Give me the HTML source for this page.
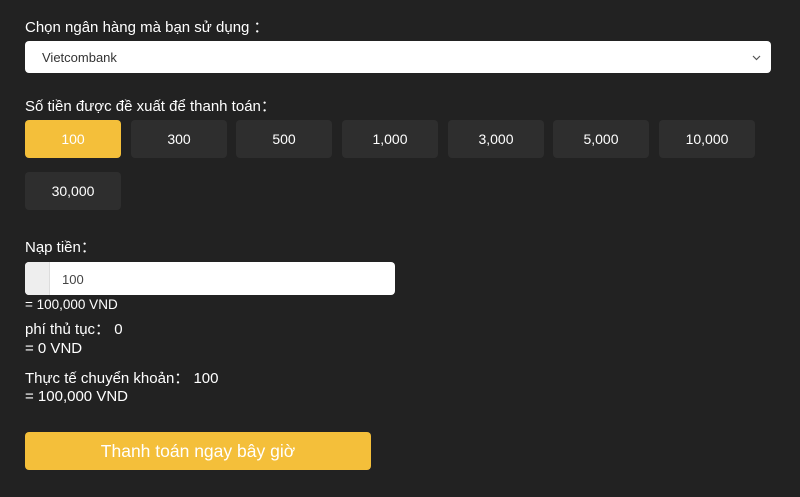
<!DOCTYPE html>
<html><head><meta charset="utf-8"><style>
*{margin:0;padding:0;box-sizing:border-box}
body{width:800px;height:497px;background:#222;font-family:"Liberation Sans",Arial,sans-serif;color:#fff;position:relative;overflow:hidden}
.a{position:absolute;white-space:nowrap}
.l{font-size:15px}
.sel{left:25px;top:41px;width:746px;height:32px;background:#fff;border-radius:4px;color:#333;font-size:13px;padding:9px 0 0 17px}
.btn{position:absolute;width:96px;height:38px;background:#2e2e2e;border-radius:4px;font-size:14px;text-align:center;line-height:38px;color:#fff}
.y{background:#f4bf3a}
</style></head><body>
<div class="a l" style="left:25px;top:16px">Chọn ngân hàng mà bạn sử dụng ：</div>
<div class="a sel">Vietcombank
<svg style="position:absolute;right:10px;top:14px" width="9" height="6" viewBox="0 0 9 6"><path d="M1 1l3.5 3.5L8 1" stroke="#555" stroke-width="1.2" fill="none"/></svg></div>
<div class="a l" style="left:25px;top:95px">Số tiền được đề xuất để thanh toán：</div>
<div class="btn y" style="left:25px;top:120px">100</div>
<div class="btn" style="left:131px;top:120px">300</div>
<div class="btn" style="left:236px;top:120px">500</div>
<div class="btn" style="left:342px;top:120px">1,000</div>
<div class="btn" style="left:448px;top:120px">3,000</div>
<div class="btn" style="left:553px;top:120px">5,000</div>
<div class="btn" style="left:659px;top:120px">10,000</div>
<div class="btn" style="left:25px;top:172px">30,000</div>
<div class="a l" style="left:25px;top:236px">Nạp tiền：</div>
<div class="a" style="left:25px;top:262px;width:370px;height:33px;background:#fff;border-radius:4px;overflow:hidden">
<div style="position:absolute;left:0;top:0;width:25px;height:33px;background:#eee;border-right:1px solid #ddd"></div>
<div style="position:absolute;left:37px;top:10px;font-size:13px;color:#444">100</div></div>
<div class="a" style="left:25px;top:297px;font-size:13.5px">= 100,000 VND</div>
<div class="a" style="left:25px;top:318px;font-size:15px">phí thủ tục：&nbsp;0</div>
<div class="a" style="left:25px;top:340px;font-size:15px">= 0 VND</div>
<div class="a" style="left:25px;top:367px;font-size:15px">Thực tế chuyển khoản：&nbsp;100</div>
<div class="a" style="left:25px;top:388px;font-size:15px">= 100,000 VND</div>
<div class="a" style="left:25px;top:432px;width:346px;height:38px;background:#f4bf3a;border-radius:4px;text-align:center;line-height:38px;font-size:17.5px;color:#fff">Thanh toán ngay bây giờ</div>
</body></html>
